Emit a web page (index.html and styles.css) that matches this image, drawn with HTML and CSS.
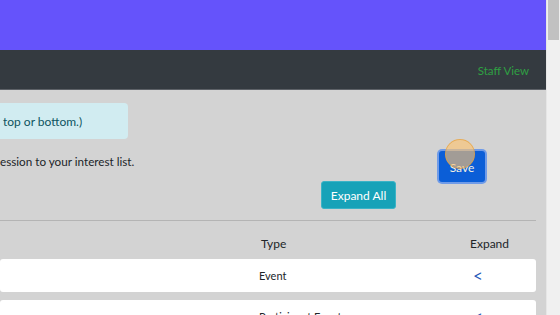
FILE: index.html
```html
<!DOCTYPE html>
<html lang="en">

<head>
    <meta charset="UTF-8">
    <meta name="viewport" content="width=device-width, initial-scale=1.0">
    <title>Sessions</title>
    <link rel="stylesheet" href="styles.css">
</head>

<body>
    <div class="page">
        <div class="banner"></div>

        <nav class="navbar">
            <a class="staff-link" href="#">Staff View</a>
        </nav>

        <main class="content">
            <!-- Info box -->
            <div class="alert-info">top or bottom.)</div>

            <div class="toolbar">
                <div class="intro">
                    <p>ession to your interest list.</p>
                    <div class="expand-row">
                        <button class="btn btn-expand">Expand All</button>
                    </div>
                </div>
                <div class="save-wrap">
                    <button class="btn btn-save">Save</button>
                    <span class="click-dot"></span>
                </div>
            </div>

            <hr class="divider">

            <!-- Sessions list -->
            <div class="session-head">
                <span class="col-type">Type</span>
                <span class="col-expand">Expand</span>
            </div>
            <div class="session-row">
                <span class="col-type">Event</span>
                <span class="col-expand"><a class="toggle" href="#">&lt;</a></span>
            </div>
            <div class="session-row">
                <span class="col-type">Participant Event</span>
                <span class="col-expand"><a class="toggle" href="#">&lt;</a></span>
            </div>
        </main>
    </div>

    <div class="scrollbar">
        <div class="thumb"></div>
    </div>
</body>

</html>
```

FILE: styles.css
```css
* {
    margin: 0;
    padding: 0;
    box-sizing: border-box;
    font-family: 'Lato', 'Noto Sans', sans-serif;
}

body {
    display: flex;
    height: 100vh;
    overflow: hidden;
    background-color: #d3d3d3;
    color: #212529;
    font-size: 12px;
}

.page {
    flex: 1;
    display: flex;
    flex-direction: column;
    overflow: hidden;
}

.banner {
    flex-shrink: 0;
    height: 50px;
    background-color: #6553fb;
}

.navbar {
    flex-shrink: 0;
    height: 40px;
    display: flex;
    justify-content: flex-end;
    align-items: center;
    padding-right: 17px;
    background-color: #343a40;
    border-bottom: 1px solid #5d6167;
}

.staff-link {
    color: #2fa043;
    text-decoration: none;
    font-size: 11.5px;
    padding-top: 2px;
}

.content {
    flex-shrink: 0;
    padding-right: 10px;
    background-color: #d3d3d3;
}

.alert-info {
    margin-top: 13px;
    margin-left: -6px;
    width: 134px;
    height: 36px;
    padding-left: 9px;
    display: flex;
    align-items: center;
    background-color: #d1ecf1;
    color: #0c5460;
    border-radius: 4px;
    font-size: 12px;
}

.toolbar {
    display: flex;
    margin-top: 12px;
}

.intro {
    width: 396px;
}

.intro p {
    line-height: 20px;
    font-size: 11.7px;
}

.expand-row {
    display: flex;
    justify-content: flex-end;
    margin-top: 10px;
}

.btn {
    border: none;
    border-radius: 3px;
    color: white;
    cursor: pointer;
    font-size: 12px;
}

.btn-expand {
    width: 75px;
    height: 28px;
    background-color: #17a2b8;
    border: 1px solid #3bb3c6;
}

.save-wrap {
    position: relative;
    margin-left: 43px;
}

.btn-save {
    width: 46px;
    height: 31px;
    background-color: #0b5ed7;
    box-shadow: 0 0 0 2px #6f9be8;
    color: #f4f0e0;
    padding-top: 2px;
}

.click-dot {
    position: absolute;
    left: 6px;
    top: -12px;
    width: 30px;
    height: 30px;
    border-radius: 50%;
    background-color: rgba(255, 196, 110, 0.62);
    border: 1px solid rgba(230, 160, 60, 0.7);
}

.divider {
    margin-top: 11px;
    border: none;
    border-top: 1px solid #b4b4b4;
}

.session-head,
.session-row {
    display: flex;
    align-items: center;
    padding-left: 259px;
}

.session-head {
    height: 38px;
    padding-top: 6px;
}

.session-row {
    flex-shrink: 0;
    height: 33px;
    margin-bottom: 8px;
    background-color: white;
    border-radius: 3px;
    font-size: 11px;
}

.session-head .col-type {
    padding-left: 2px;
}

.col-type {
    flex: 1;
}

.col-expand {
    width: 66px;
}

.toggle {
    display: inline-block;
    padding-left: 3px;
    color: #1f58b8;
    text-decoration: none;
    font-size: 17px;
}

.scrollbar {
    flex-shrink: 0;
    width: 14px;
    background-color: #f0f0f0;
    border-left: 1px solid #e6e6e6;
}

.thumb {
    margin: 0 1px;
    height: 40px;
    background-color: #c1c1c1;
}
```
